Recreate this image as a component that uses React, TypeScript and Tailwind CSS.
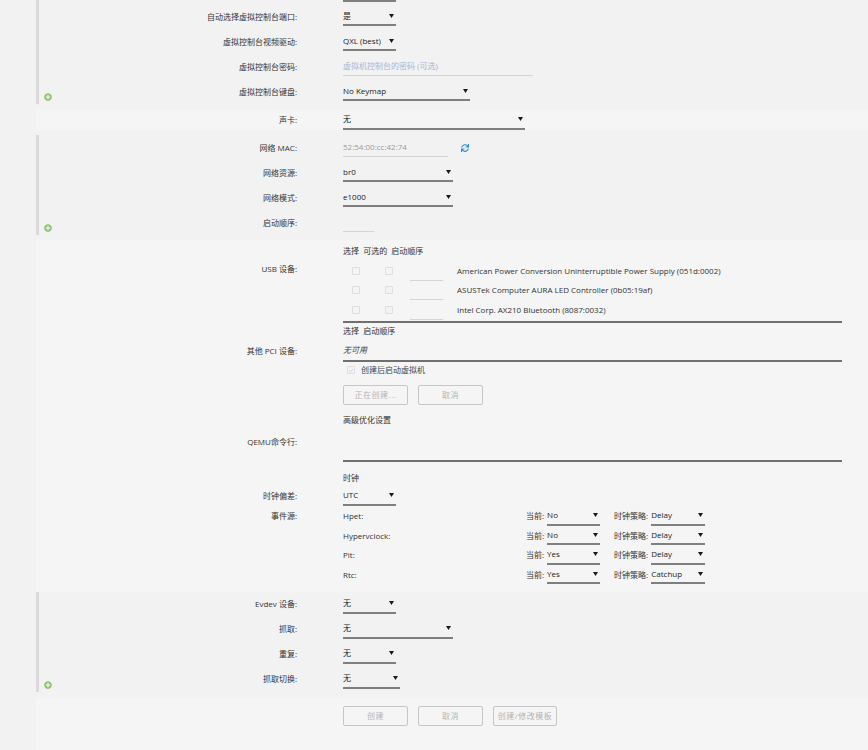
import React from "react";
import { FaPlusCircle, FaSync } from "react-icons/fa";

type RowProps = {
  label?: string;
  children?: React.ReactNode;
  h?: string;
  plus?: boolean;
  bar?: boolean;
};

const Arrow = () => (
  <svg viewBox="0 0 5 4" className="w-[5px] h-[4px] shrink-0">
    <path d="M0 0 H5 L2.5 4 Z" fill="#1a1a1a" />
  </svg>
);

const Select = ({ value, w }: { value: string; w: string }) => (
  <div
    className={`${w} h-[19px] flex items-center justify-between border-b-2 border-[#7f7f7f] pr-[2px] text-[#222]`}
  >
    <span>{value}</span>
    <Arrow />
  </div>
);

const Row = ({ label, children, h = "h-[25px]", plus, bar }: RowProps) => (
  <div className={`flex ${h}`}>
    <div
      className={`${bar ? "w-[258px]" : "w-[261px]"} shrink-0 flex items-center`}
    >
      {plus && (
        <FaPlusCircle
          size={8}
          className="self-end mb-[3px] ml-[5px] text-[#8cc46f]"
        />
      )}
      <span className="ml-auto text-[#333] whitespace-nowrap">{label}</span>
    </div>
    <div className="ml-[46px] flex items-center">{children}</div>
  </div>
);

const Box = ({ checked }: { checked?: boolean }) => (
  <div className="w-[8px] h-[8px] shrink-0 rounded-[1px] border border-[#dedede] bg-[#f4f4f4] flex items-center justify-center">
    {checked && (
      <svg viewBox="0 0 10 10" className="w-[7px] h-[7px]">
        <path
          d="M2 5.2 L4.2 7.3 L8.2 2.8"
          fill="none"
          stroke="#cfcfcf"
          strokeWidth="1.6"
        />
      </svg>
    )}
  </div>
);

const Btn = ({ text, w = "w-[65px]" }: { text: string; w?: string }) => (
  <div
    className={`${w} h-[20px] shrink-0 rounded-[2px] border border-[#c6c6c6] bg-[#f5f5f5] text-[#b4b4b4] flex items-center justify-center tracking-[0.5px]`}
  >
    {text}
  </div>
);

const usb = [
  "American Power Conversion Uninterruptible Power Supply (051d:0002)",
  "ASUSTek Computer AURA LED Controller (0b05:19af)",
  "Intel Corp. AX210 Bluetooth (8087:0032)",
];

const clocks = [
  { name: "Hpet:", present: "No", policy: "Delay" },
  { name: "Hypervclock:", present: "No", policy: "Delay" },
  { name: "Pit:", present: "Yes", policy: "Delay" },
  { name: "Rtc:", present: "Yes", policy: "Catchup" },
];

export default function App() {
  return (
    <div className="min-h-screen bg-[#f2f2f2] pl-[36px] text-[8px] leading-[12px] text-[#222] font-['Open_Sans','Noto_Sans_CJK_SC',sans-serif]">
      {/* graphics */}
      <div className="border-l-[3px] border-[#dadada]">
        <div className="ml-[304px] w-[53px] h-[2px] bg-[#7f7f7f]" />
        <div className="h-[2px]" />
        <Row bar label="自动选择虚拟控制台端口:">
          <Select value="是" w="w-[53px]" />
        </Row>
        <Row bar label="虚拟控制台视频驱动:">
          <Select value="QXL (best)" w="w-[53px]" />
        </Row>
        <Row bar label="虚拟控制台密码:">
          <div className="w-[190px] h-[19px] flex items-center border-b border-[#d4d4d4] text-[#a9b6d3]">
            虚拟机控制台的密码 (可选)
          </div>
        </Row>
        <Row bar plus label="虚拟控制台键盘:">
          <Select value="No Keymap" w="w-[127px]" />
        </Row>
      </div>

      {/* sound */}
      <div className="mt-[6px] bg-[#f5f5f5]">
        <Row label="声卡:" h="h-[20px]">
          <Select value="无" w="w-[182px]" />
        </Row>
      </div>

      {/* network */}
      <div className="mt-[5px] border-l-[3px] border-[#dadada]">
        <Row bar label="网络 MAC:">
          <div className="w-[105px] h-[19px] flex items-center border-b border-[#d4d4d4] text-[#9a9a9a]">
            52:54:00:cc:42:74
          </div>
          <FaSync size={8} className="ml-[13px] text-[#2b8ad8]" />
        </Row>
        <Row bar label="网络资源:">
          <Select value="br0" w="w-[110px]" />
        </Row>
        <Row bar label="网络模式:">
          <Select value="e1000" w="w-[110px]" />
        </Row>
        <Row bar plus label="启动顺序:">
          <div className="w-[31px] h-[19px] border-b border-[#d4d4d4]" />
        </Row>
      </div>

      {/* devices, advanced, clock */}
      <div className="mt-[5px] bg-[#f5f5f5] pb-[7px]">
        <Row label="" h="h-[21px]">
          <span className="whitespace-pre text-[#333]">选择  可选的  启动顺序</span>
        </Row>
        <div className="flex">
          <div className="w-[261px] shrink-0 text-right pt-[2px] leading-[12px] text-[#333]">
            USB 设备:
          </div>
          <div className="ml-[46px] w-[499px] border-b-2 border-[#707070] pb-[1px]">
            {usb.map((d) => (
              <div key={d} className="flex h-[19.5px] items-center">
                <div className="w-[9px]" />
                <Box />
                <div className="w-[25px]" />
                <Box />
                <div className="ml-[17px] w-[33px] self-stretch border-b border-[#d4d4d4]" />
                <span className="ml-[14px] text-[#333]">{d}</span>
              </div>
            ))}
          </div>
        </div>
        <Row label="" h="h-[17px]">
          <span className="whitespace-pre text-[#333]">选择  启动顺序</span>
        </Row>
        <div className="flex">
          <div className="w-[261px] shrink-0 flex items-center justify-end text-[#333]">
            其他 PCI 设备:
          </div>
          <div className="ml-[46px] w-[499px] h-[22px] flex items-center border-b-2 border-[#707070] italic text-[#444]">
            无可用
          </div>
        </div>
        <Row label="" h="h-[17px]">
          <div className="ml-[4px] flex items-center">
            <Box checked />
            <span className="ml-[6px] text-[#444]">创建后启动虚拟机</span>
          </div>
        </Row>
        <div className="mt-[6px] ml-[307px] flex gap-[10px]">
          <Btn text="正在创建..." />
          <Btn text="取消" />
        </div>
        <div className="mt-[7px]">
          <Row label="" h="h-[16px]">
            <span className="text-[#333]">高级优化设置</span>
          </Row>
        </div>
        <div className="flex">
          <div className="w-[261px] shrink-0 text-right pt-[8px] text-[#333]">
            QEMU命令行:
          </div>
          <div className="ml-[46px] w-[499px] h-[34px] border-b-2 border-[#707070]" />
        </div>
        <div className="mt-[8px]">
          <Row label="" h="h-[16px]">
            <span className="text-[#333]">时钟</span>
          </Row>
        </div>
        <Row label="时钟偏差:" h="h-[21px]">
          <Select value="UTC" w="w-[53px]" />
        </Row>
        {clocks.map((c, i) => (
          <Row key={c.name} label={i === 0 ? "事件源:" : ""} h="h-[19.5px]">
            <span className="w-[183px] text-[#333]">{c.name}</span>
            <span className="text-[#333]">当前:</span>
            <div className="ml-[3px]">
              <Select value={c.present} w="w-[53px]" />
            </div>
            <span className="ml-[14px] text-[#333]">时钟策略:</span>
            <div className="ml-[3px]">
              <Select value={c.policy} w="w-[54px]" />
            </div>
          </Row>
        ))}
      </div>

      {/* evdev */}
      <div className="border-l-[3px] border-[#dadada]">
        <Row bar label="Evdev 设备:">
          <Select value="无" w="w-[53px]" />
        </Row>
        <Row bar label="抓取:">
          <Select value="无" w="w-[110px]" />
        </Row>
        <Row bar label="重复:">
          <Select value="无" w="w-[53px]" />
        </Row>
        <Row bar plus label="抓取切换:">
          <Select value="无" w="w-[57px]" />
        </Row>
      </div>

      {/* actions */}
      <div className="mt-[6px] bg-[#f5f5f5] pt-[8px] pb-[26px]">
        <div className="ml-[307px] flex gap-[10px]">
          <Btn text="创建" />
          <Btn text="取消" />
          <Btn text="创建/修改模板" w="w-[64px]" />
        </div>
      </div>
    </div>
  );
}
